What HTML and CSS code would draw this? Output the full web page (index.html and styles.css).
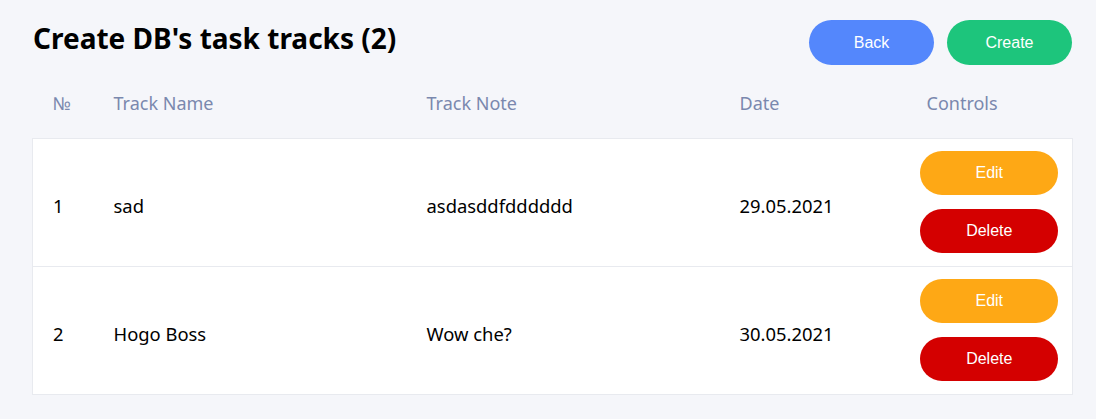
FILE: index.html
```html
<!DOCTYPE html>
<html lang="en">
<head>
<meta charset="utf-8">
<title>Create DB's task tracks</title>
<link rel="stylesheet" href="styles.css">
</head>
<body>
<div class="page">
  <div class="top">
    <h1 class="title">Create DB's task tracks (2)</h1>
    <div class="actions">
      <button class="btn btn-back">Back</button>
      <button class="btn btn-create">Create</button>
    </div>
  </div>
  <table class="tracks">
    <colgroup>
      <col class="c-num"><col class="c-name"><col class="c-note"><col class="c-date"><col class="c-ctrl">
    </colgroup>
    <thead>
      <tr><th>№</th><th>Track Name</th><th>Track Note</th><th>Date</th><th>Controls</th></tr>
    </thead>
    <tbody>
      <tr>
        <td>1</td><td>sad</td><td>asdasddfdddddd</td><td>29.05.2021</td>
        <td class="ctrl"><div class="ctrl-box"><button class="btn btn-edit">Edit</button><button class="btn btn-delete">Delete</button></div></td>
      </tr>
      <tr>
        <td>2</td><td>Hogo Boss</td><td>Wow che?</td><td>30.05.2021</td>
        <td class="ctrl"><div class="ctrl-box"><button class="btn btn-edit">Edit</button><button class="btn btn-delete">Delete</button></div></td>
      </tr>
    </tbody>
  </table>
</div>
</body>
</html>
```
FILE: styles.css
```css
* { box-sizing: border-box; }
html, body { margin: 0; padding: 0; }
body {
  background: #f5f6fa;
  font-family: "Noto Sans", "Open Sans", sans-serif;
  color: #000;
}
.page { padding: 20px 24px 0 32px; }
.top {
  display: flex;
  justify-content: space-between;
  align-items: flex-start;
}
.title {
  margin: 0;
  font-size: 28px;
  line-height: 36px;
  font-weight: 700;
  padding-left: 1px;
}
.actions { display: flex; gap: 13px; }
.btn {
  border: none;
  color: #fff;
  font-family: "Liberation Sans", Arial, sans-serif;
  font-size: 16px;
  cursor: pointer;
  padding: 0;
}
.btn-back, .btn-create { width: 125px; height: 45px; border-radius: 23px; }
.btn-back { background: #5487fc; }
.btn-create { background: #1dc57c; }
.tracks {
  width: 1040px;
  border-collapse: collapse;
  table-layout: fixed;
}
.c-num { width: 61px; }
.c-name { width: 313px; }
.c-note { width: 313px; }
.c-date { width: 187px; }
.c-ctrl { width: 166px; }
.tracks th {
  text-align: left;
  font-weight: 400;
  font-size: 18px;
  line-height: 24px;
  color: #7a88ae;
  padding: 26px 20px 23px;
}
.tracks tbody { background: #fff; border: 1px solid #e8eaef; }
.tracks tbody tr { border-bottom: 1px solid #e8eaef; }
.tracks td {
  font-size: 18.4px;
  line-height: 24px;
  padding: 16px 20px 10px;
  vertical-align: middle;
}
.tracks td.ctrl { padding: 12px 0 13px; }
.ctrl-box {
  display: flex;
  flex-direction: column;
  align-items: center;
  gap: 14px;
}
.btn-edit, .btn-delete { width: 138px; height: 44px; border-radius: 22px; }
.btn-edit { background: #fea815; }
.btn-delete { background: #d40000; }
```
